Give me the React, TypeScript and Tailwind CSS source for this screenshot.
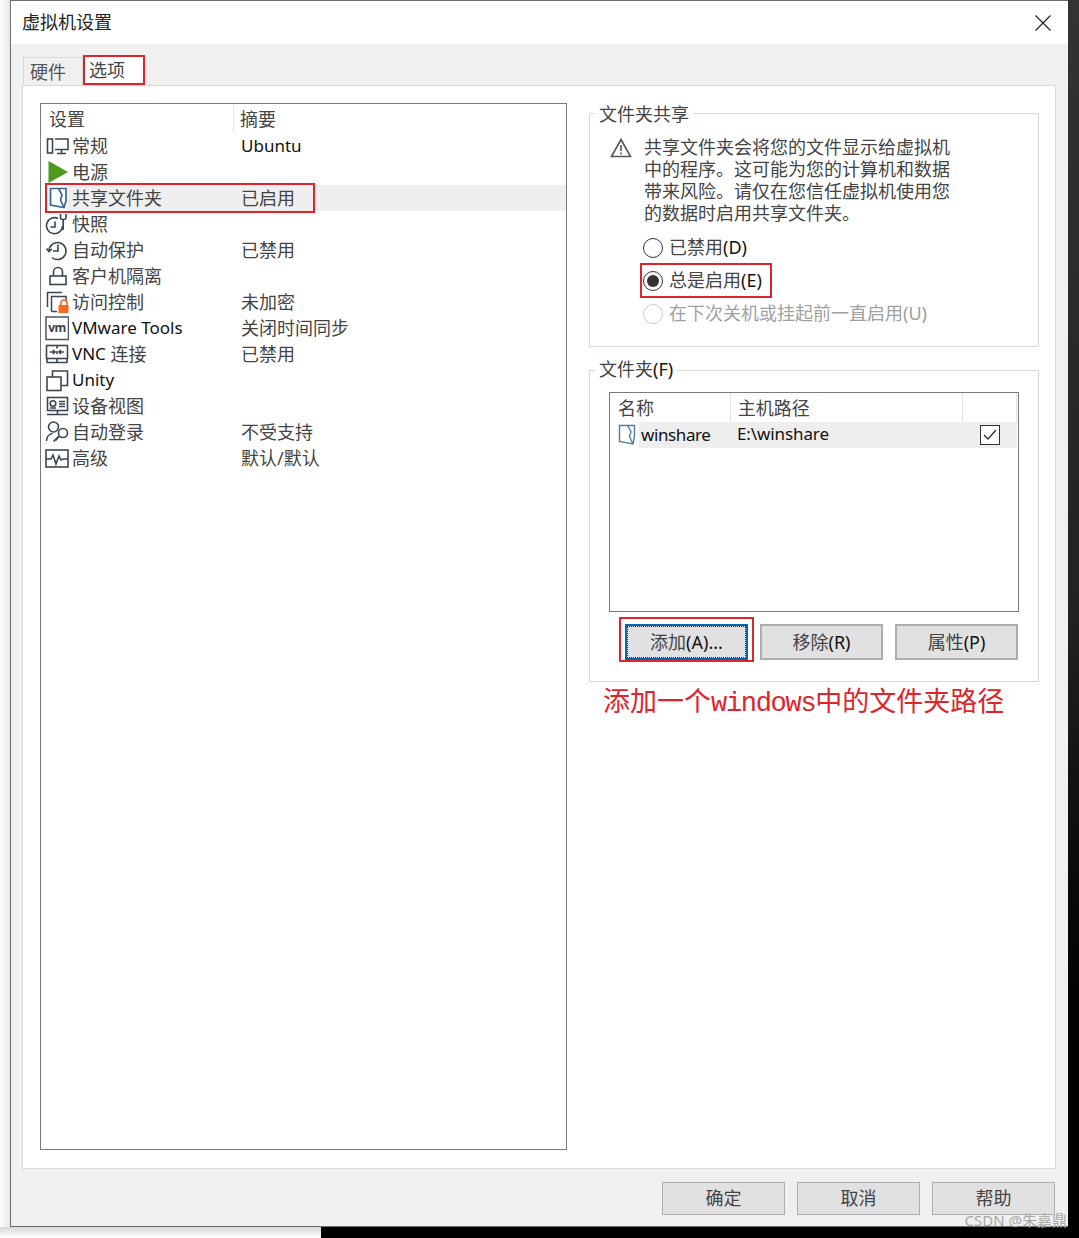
import React from "react";

const FONT = "font-['Noto_Sans','Noto_Sans_CJK_SC',sans-serif]";

function Svg({ children, w = 24, h = 24 }: { children: React.ReactNode; w?: number; h?: number }) {
  return (
    <svg width={w} height={h} viewBox={`0 0 ${w} ${h}`} fill="none" stroke="#3c4650" strokeWidth="1.6" className="shrink-0">
      {children}
    </svg>
  );
}

function L({ children, className = "" }: { children: React.ReactNode; className?: string }) {
  return <span className={`text-[17px] leading-[22px] relative top-[-1px] text-[#111] ${className}`}>{children}</span>;
}

function D({ children }: { children: React.ReactNode }) {
  return <span className="text-[#111]">{children}</span>;
}

const icons: Record<string, React.ReactNode> = {
  general: (
    <Svg>
      <rect x="2.500" y="5" width="5" height="14" />
      <path d="M10 5h13v10.500H10M16.500 15.500v3.500M12 19.500h9" />
    </Svg>
  ),
  power: (
    <svg width="24" height="24" viewBox="0 0 24 24" className="shrink-0">
      <path d="M3.500 1 23 12 3.500 23z" fill="#4d9a1c" />
    </svg>
  ),
  share: (
    <svg width="24" height="24" viewBox="0 0 24 24" fill="none" strokeWidth="1.700" stroke="#37678e" className="shrink-0">
      <path d="M5.500 2.500h15.500v12.500l-2 6.500-13.500-2.500z" />
      <path d="M13.500 2.500l3.500 6.500-1.500 5 3.500 7.500" />
    </svg>
  ),
  snapshot: (
    <Svg>
      <path d="M13 6.500A8 8 0 1 0 17.500 14" />
      <path d="M10 9.500v5.500h-4.500" />
      <path d="M15.500 2v3.500c0 1.200 1 2 2.200 2h1.100c1.200 0 2.200-.8 2.200-2V2M18.200 7.500V18" />
    </Svg>
  ),
  autoprotect: (
    <Svg>
      <path d="M4 13a8.500 8.500 0 1 1 3 6.500" />
      <path d="M13 6.500v6.500h-5" />
      <path d="M1.500 10.500l2.500 3 3-2.500" />
    </Svg>
  ),
  lock: (
    <Svg>
      <rect x="5" y="12" width="16" height="8.500" />
      <path d="M8.500 12V8a4.500 4.500 0 0 1 9 0v4" />
    </Svg>
  ),
  access: (
    <svg width="24" height="24" viewBox="0 0 24 24" fill="none" stroke="#3c4650" strokeWidth="1.500" className="shrink-0">
      <path d="M2.500 17V2.500H17" />
      <path d="M6.500 21.500V6.500H21v5" />
      <path d="M6.500 21.500H12" />
      <path d="M16 15v-2a3 3 0 0 1 6 0v2" stroke="#f26a24" strokeWidth="1.600" />
      <rect x="13.500" y="15" width="10" height="8" fill="#f26a24" stroke="none" />
    </svg>
  ),
  tools: (
    <svg width="24" height="26" viewBox="0 0 24 26" className="shrink-0">
      <rect x="1" y="2" width="22.500" height="22.500" fill="none" stroke="#4b5660" strokeWidth="1.500" />
      <text x="12" y="16.500" textAnchor="middle" fontSize="12" fontWeight="700" fontFamily="Noto Sans, sans-serif" letterSpacing="-0.5" fill="#36424d">vm</text>
    </svg>
  ),
  vnc: (
    <Svg>
      <rect x="1.500" y="3.500" width="21" height="13" />
      <path d="M12 3.500v3M12 9v3M5 10h5M8 8l2 2-2 2M19 10h-5M16 8l-2 2 2 2M2 16.500v4M22 16.500v4M1.500 20.500h21M12 16.500v4" />
    </Svg>
  ),
  unity: (
    <Svg>
      <rect x="2" y="9" width="14" height="13.500" />
      <path d="M7.500 9V3h15v14.500h-6" />
    </Svg>
  ),
  device: (
    <Svg>
      <rect x="2.500" y="3.500" width="20" height="13" />
      <circle cx="8" cy="9.500" r="2.800" />
      <path d="M14 7.500h6M14 10h6M14 12.500h6M5 14h6M12.500 16.500v4M2 20.500h21" />
    </Svg>
  ),
  autologin: (
    <Svg>
      <circle cx="8.500" cy="7" r="5" />
      <path d="M1.500 21c0-4 2.500-7 6-7.500M8.500 21.500l5-5" />
      <circle cx="18" cy="13" r="4.500" />
      <path d="M14.500 16l-4 4.500" />
    </Svg>
  ),
  advanced: (
    <Svg>
      <rect x="1" y="4" width="22" height="17" />
      <path d="M1 13h5l2-4 3 9 3-8 2 4 2-1h5" />
    </Svg>
  ),
};

const rows: { icon: string; label: React.ReactNode; summary?: React.ReactNode; on?: boolean }[] = [
  { icon: "general", label: "常规", summary: <L>Ubuntu</L> },
  { icon: "power", label: "电源" },
  { icon: "share", label: "共享文件夹", summary: "已启用", on: true },
  { icon: "snapshot", label: "快照" },
  { icon: "autoprotect", label: "自动保护", summary: "已禁用" },
  { icon: "lock", label: "客户机隔离" },
  { icon: "access", label: "访问控制", summary: "未加密" },
  { icon: "tools", label: <L>VMware Tools</L>, summary: "关闭时间同步" },
  { icon: "vnc", label: <><L>VNC</L> 连接</>, summary: "已禁用" },
  { icon: "unity", label: <L>Unity</L> },
  { icon: "device", label: "设备视图" },
  { icon: "autologin", label: "自动登录", summary: "不受支持" },
  { icon: "advanced", label: "高级", summary: "默认/默认" },
];

function RedBox({ className }: { className: string }) {
  return <div className={`absolute border-2 border-[#e0242c] pointer-events-none ${className}`} />;
}

function GrayButton({ children }: { children: React.ReactNode }) {
  return (
    <button className="w-[123px] h-[36px] bg-[#e1e1e1] border-2 border-[#adadad] text-[18px] text-[#444]">
      {children}
    </button>
  );
}

function Group({ title, legendTop, children, className }: { title: React.ReactNode; legendTop: string; children: React.ReactNode; className: string }) {
  return (
    <div className={`relative border border-[#d9d9d9] ${className}`}>
      <div className={`absolute left-[5px] bg-white pl-[4px] pr-[4px] h-[26px] leading-[26px] text-[18px] text-[#444] ${legendTop}`}>{title}</div>
      {children}
    </div>
  );
}

function Radio({ label, checked, disabled }: { label: React.ReactNode; checked?: boolean; disabled?: boolean }) {
  return (
    <div className={`flex items-center h-[33px] text-[18px] ${disabled ? "text-[#a0a0a0]" : "text-[#444]"}`}>
      <span className={`w-[20px] h-[20px] rounded-full border-[1.5px] flex items-center justify-center mr-[6px] ${disabled ? "border-[#ccc]" : "border-[#333]"}`}>
        {checked && <span className="w-[12px] h-[12px] rounded-full bg-[#333]" />}
      </span>
      <span>{label}</span>
    </div>
  );
}

export default function App() {
  return (
    <div className={`w-[1079px] h-[1238px] relative overflow-hidden bg-white flex flex-col ${FONT}`}>
      <div className="flex h-[1227px]">
        <div className="w-[10px] bg-gradient-to-r from-white to-[#e6e6e6]" />
        <div className="w-[1058px] border border-r-0 border-[#6f6f6f] bg-[#f0f0f0] flex flex-col">
          {/* title bar */}
          <div className="h-[43px] bg-white flex items-center justify-between pl-[11px] pr-[17px] text-[18px] text-[#222]">
            <span>虚拟机设置</span>
            <svg width="16" height="16" viewBox="0 0 16 16" stroke="#222" strokeWidth="1.200">
              <path d="M.5.5l15 15M15.500.5l-15 15" />
            </svg>
          </div>
          {/* tabs */}
          <div className="flex h-[41px] items-end pl-[12px] pt-[11px] text-[18px]">
            <div className="w-[60px] h-[28px] border border-b-0 border-[#d9d9d9] bg-[#f0f0f0] text-[#555] pl-[6px] leading-[28px]">硬件</div>
            <div className="relative w-[60px] h-[30px] bg-white text-[#444] pl-[5px] leading-[30px] ml-[1px]">
              选项
              <RedBox className="left-[-1px] top-0 w-[62px] h-[30px]" />
            </div>
          </div>
          {/* panel */}
          <div className="ml-[11px] mr-[12px] h-[1084px] bg-white border border-[#d9d9d9] flex pl-[17px] pt-[17px] gap-[22px]">
            {/* settings list */}
            <div className="w-[527px] h-[1047px] border border-[#7a7a7a] flex flex-col text-[18px] text-[#444]">
              <div className="h-[29px] flex shrink-0">
                <div className="w-[193px] border-r border-[#e4e4e4] pl-[8px] leading-[30px]">设置</div>
                <div className="pl-[6px] leading-[30px]">摘要</div>
              </div>
              {rows.map((r) => (
                <div key={r.icon} className="flex h-[26px] shrink-0 relative">
                  <div className="w-[26px] pl-[4px] flex items-center">{icons[r.icon]}</div>
                  <div className={`flex-1 flex items-center pl-[5px] ${r.on ? "bg-[#efefef]" : ""}`}>
                    <span className="w-[169px] whitespace-nowrap">{r.label}</span>
                    <span>{r.summary}</span>
                  </div>
                  {r.on && <RedBox className="left-[4px] top-[-2px] w-[270px] h-[30px]" />}
                </div>
              ))}
            </div>
            {/* right column */}
            <div className="w-[450px] flex flex-col pt-[10px]">
              <Group title="文件夹共享" legendTop="top-[-13px]" className="h-[234px] pl-[20px] pt-[22px]">
                <div className="flex">
                  <svg width="22" height="20" viewBox="0 0 22 20" fill="none" className="shrink-0 mt-[2px] mr-[12px]">
                    <path d="M11 1.500 20.500 18.500h-19z" stroke="#555" strokeWidth="1.600" />
                    <path d="M11 7v6M11 14.500v2" stroke="#555" strokeWidth="1.600" />
                  </svg>
                  <div className="w-[310px] text-[18px] leading-[22px] text-[#444]">
                    共享文件夹会将您的文件显示给虚拟机<br />
                    中的程序。这可能为您的计算机和数据<br />
                    带来风险。请仅在您信任虚拟机使用您<br />
                    的数据时启用共享文件夹。
                  </div>
                </div>
                <div className="ml-[33px] mt-[7px] relative">
                  <Radio label={<>已禁用<D>(D)</D></>} />
                  <Radio label={<>总是启用<D>(E)</D></>} checked />
                  <Radio label="在下次关机或挂起前一直启用(U)" disabled />
                  <RedBox className="left-[-3px] top-[32px] w-[132px] h-[35px]" />
                </div>
              </Group>
              <Group title={<>文件夹<D>(F)</D></>} legendTop="top-[-15px]" className="mt-[23px] h-[312px] pl-[19px] pt-[21px]">
                <div className="w-[410px] h-[220px] border border-[#7a7a7a] text-[18px] text-[#444]">
                  <div className="flex h-[29px] mr-[1px]">
                    <div className="w-[121px] border-r border-[#e4e4e4] pl-[8px] leading-[30px]">名称</div>
                    <div className="w-[233px] border-r border-[#e4e4e4] pl-[7px] leading-[30px]">主机路径</div>
                    <div className="w-[54px] border-r border-[#e4e4e4]" />
                  </div>
                  <div className="flex h-[26px] items-center">
                    <div className="w-[29px] pl-[8px]">
                      <svg width="18" height="22" viewBox="0 0 18 22" fill="none" stroke="#4f7ea3" strokeWidth="1.400">
                        <path d="M1.500 1.500h15v10.500l-1.500 8-13.500-2.500z" />
                        <path d="M9.500 1.500l3.500 6-1.500 5 3.500 7.500" />
                      </svg>
                    </div>
                    <div className="w-[378px] h-full bg-[#eeeeee] flex items-center pl-[2px] relative">
                      <span className="w-[96px]"><L className="tracking-[-0.4px]">winshare</L></span>
                      <L className="tracking-[-0.1px]">E:\winshare</L>
                      <span className="absolute left-[341px] top-[3px] w-[20px] h-[20px] border border-[#333] bg-white flex items-center justify-center">
                        <svg width="14" height="12" viewBox="0 0 14 12" fill="none" stroke="#333" strokeWidth="1.400">
                          <path d="M1 6l4 4 8-9" />
                        </svg>
                      </span>
                    </div>
                  </div>
                </div>
                <div className="flex mt-[12px] ml-[16px] gap-[12px]">
                  <div className="relative">
                    <button className="block w-[123px] h-[36px] bg-[#e1e1e1] border-2 border-[#0a66ac] text-[18px] text-[#444]">
                      <span className="block border border-dotted border-[#222] h-full leading-[30px]">添加<D>(A)...</D></span>
                    </button>
                    <RedBox className="left-[-6px] top-[-7px] w-[135px] h-[45px]" />
                  </div>
                  <GrayButton>移除<D>(R)</D></GrayButton>
                  <GrayButton>属性<D>(P)</D></GrayButton>
                </div>
              </Group>
              <div className="mt-[1px] ml-[14px] h-[36px] leading-[36px] text-[27px] text-[#e0242c] whitespace-nowrap">
                添加一个<span className="font-['Liberation_Mono',monospace] tracking-[-1.3px]">windows</span>中的文件夹路径
              </div>
            </div>
          </div>
          {/* footer */}
          <div className="flex-1 flex justify-end gap-[12px] pt-[13px] pr-[13px]">
            {["确定", "取消", "帮助"].map((t) => (
              <button key={t} className="w-[123px] h-[33px] bg-[#e1e1e1] border border-[#adadad] text-[18px] text-[#444]">
                {t}
              </button>
            ))}
          </div>
        </div>
        <div className="flex-1 bg-gradient-to-b from-[#333333] via-[#222222] to-black" />
      </div>
      <div className="flex h-[11px]">
        <div className="w-[321px] bg-gradient-to-b from-[#d8d8d8] to-white" />
        <div className="flex-1 bg-black" />
      </div>
      <div className="absolute right-[12px] bottom-[9px] text-[15px] leading-[18px] text-[#a8a8a8]">CSDN @朱嘉鼎</div>
    </div>
  );
}
